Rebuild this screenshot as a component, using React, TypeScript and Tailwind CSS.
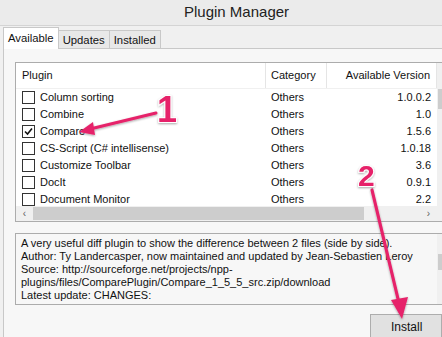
import React from "react";

const rows = [
  { name: "Column sorting", cat: "Others", ver: "1.0.0.2", checked: false },
  { name: "Combine", cat: "Others", ver: "1.0", checked: false },
  { name: "Compare", cat: "Others", ver: "1.5.6", checked: true },
  { name: "CS-Script (C# intellisense)", cat: "Others", ver: "1.0.18", checked: false },
  { name: "Customize Toolbar", cat: "Others", ver: "3.6", checked: false },
  { name: "DocIt", cat: "Others", ver: "0.9.1", checked: false },
  { name: "Document Monitor", cat: "Others", ver: "2.2", checked: false },
];

function Checkbox({ checked }: { checked: boolean }) {
  return (
    <div className="w-[13px] h-[13px] border border-[#333] bg-white flex items-center justify-center shrink-0">
      {checked && (
        <svg width="9" height="9" viewBox="0 0 9 9">
          <path d="M1 4.5 L3.5 7 L8 1.5" stroke="#111" strokeWidth="1.6" fill="none" />
        </svg>
      )}
    </div>
  );
}

export default function App() {
  return (
    <div
      className="relative w-[442px] h-[337px] overflow-hidden bg-[#f0f0f0] text-[#111]"
      style={{ fontFamily: '"Liberation Sans", Arial, sans-serif' }}
    >
      {/* Title bar */}
      <div className="h-[26px] bg-[#ebebeb] border-b border-[#d4d4d4] pl-[184px] pt-[1px] text-[15px] leading-[22px] text-[#222]">
        Plugin Manager
      </div>
      {/* Tabs */}
      <div className="flex items-end h-[22px] pl-[3px] text-[11.3px]">
        <div className="h-[22px] px-[4px] bg-white border border-b-0 border-[#c8c8c8] leading-[20px] relative z-10 mb-[-1px]">
          Available
        </div>
        <div className="h-[18px] px-[4px] bg-[#e8e8e8] border border-l-0 border-b-0 border-[#c8c8c8] leading-[18px]">
          Updates
        </div>
        <div className="h-[18px] px-[4px] bg-[#e8e8e8] border border-l-0 border-b-0 border-[#c8c8c8] leading-[18px]">
          Installed
        </div>
      </div>
      {/* Panel */}
      <div className="ml-[3px] h-[300px] bg-[#f7f7f7] border-t border-l border-[#c8c8c8] pl-[11px] pt-[13px] text-[11px]">
        {/* List */}
        <div className="w-[440px] h-[160px] bg-white border border-[#acacac] flex">
          <div className="w-[421px] flex flex-col">
            <div className="flex h-[26px] items-center border-b border-[#f0f0f0]">
              <div className="w-[250px] pl-[6px] border-r border-[#e5e5e5] h-full flex items-center">Plugin</div>
              <div className="w-[61px] pl-[5px] border-r border-[#e5e5e5] h-full flex items-center">Category</div>
              <div className="w-[110px] pr-[6px] text-right border-r border-[#e5e5e5] h-full flex items-center justify-end">
                Available Version
              </div>
            </div>
            <div className="h-[117px] overflow-hidden">
              {rows.map((r) => (
                <div key={r.name} className="flex h-[17px] items-center">
                  <div className="w-[250px] pl-[6px] flex items-center gap-[5px]">
                    <Checkbox checked={r.checked} />
                    <span>{r.name}</span>
                  </div>
                  <div className="w-[61px] pl-[5px]">{r.cat}</div>
                  <div className="w-[110px] pr-[6px] text-right">{r.ver}</div>
                </div>
              ))}
            </div>
            <div className="h-[15px] flex items-center bg-[#f0f0f0]">
              <div className="w-[17px] h-full flex items-center justify-center text-[#606060] text-[10px]">‹</div>
              <div className="w-[331px] h-[13px] bg-[#cdcdcd]" />
              <div className="flex-1" />
              <div className="w-[17px] h-full flex items-center justify-center text-[#606060] text-[10px]">›</div>
            </div>
          </div>
          <div className="w-[17px] bg-[#f0f0f0] pt-[26px]">
            <div className="ml-[1px] h-[20px] w-[15px] bg-[#cdcdcd]" />
          </div>
        </div>
        {/* Description */}
        <div className="mt-[11px] w-[440px] h-[72px] bg-[#f7f7f7] border border-[#acacac] flex">
          <div className="w-[421px] pl-[5px] pt-[3px] leading-[13px] text-[11px] whitespace-nowrap">
            <div>A very useful diff plugin to show the difference between 2 files (side by side).</div>
            <div>Author: Ty Landercasper, now maintained and updated by Jean-Sebastien Leroy</div>
            <div>Source: http://sourceforge.net/projects/npp-</div>
            <div>plugins/files/ComparePlugin/Compare_1_5_5_src.zip/download</div>
            <div>Latest update: CHANGES:</div>
          </div>
          <div className="w-[17px] bg-[#f0f0f0] pt-[20px]">
            <div className="ml-[1px] h-[16px] w-[15px] bg-[#cdcdcd]" />
          </div>
        </div>
        {/* Install */}
        <div className="mt-[9px] flex">
          <div className="ml-[355px] w-[80px] h-[26px] bg-[#e1e1e1] border border-[#adadad] flex items-center pl-[20px] text-[12px]">
            Install
          </div>
        </div>
      </div>
      {/* Annotations */}
      <svg className="absolute inset-0 pointer-events-none" width="442" height="337" viewBox="0 0 442 337">
        <defs>
          <filter id="sh" x="-50%" y="-50%" width="200%" height="200%">
            <feDropShadow dx="0" dy="1" stdDeviation="1" floodColor="#000" floodOpacity="0.35" />
          </filter>
        </defs>
        <g filter="url(#sh)">
          <line x1="156" y1="113" x2="90" y2="129" stroke="#e6246a" strokeWidth="3" strokeLinecap="round" />
          <polygon points="79,132 93,122 95,135" fill="#e6246a" />
          <line x1="372" y1="190" x2="399" y2="303" stroke="#e6246a" strokeWidth="3.2" strokeLinecap="round" />
          <polygon points="402,319 391,300 408,297" fill="#e6246a" />
        </g>
        <text x="157" y="122" fontSize="36" fontWeight="900" fill="#e6246a" stroke="#fff" strokeWidth="2" paintOrder="stroke" style={{ fontFamily: '"Liberation Sans", Arial, sans-serif' }} filter="url(#sh)">1</text>
        <text x="358" y="186" fontSize="30" fontWeight="900" fill="#e6246a" stroke="#fff" strokeWidth="2" paintOrder="stroke" style={{ fontFamily: '"Liberation Sans", Arial, sans-serif' }} filter="url(#sh)">2</text>
      </svg>
    </div>
  );
}
